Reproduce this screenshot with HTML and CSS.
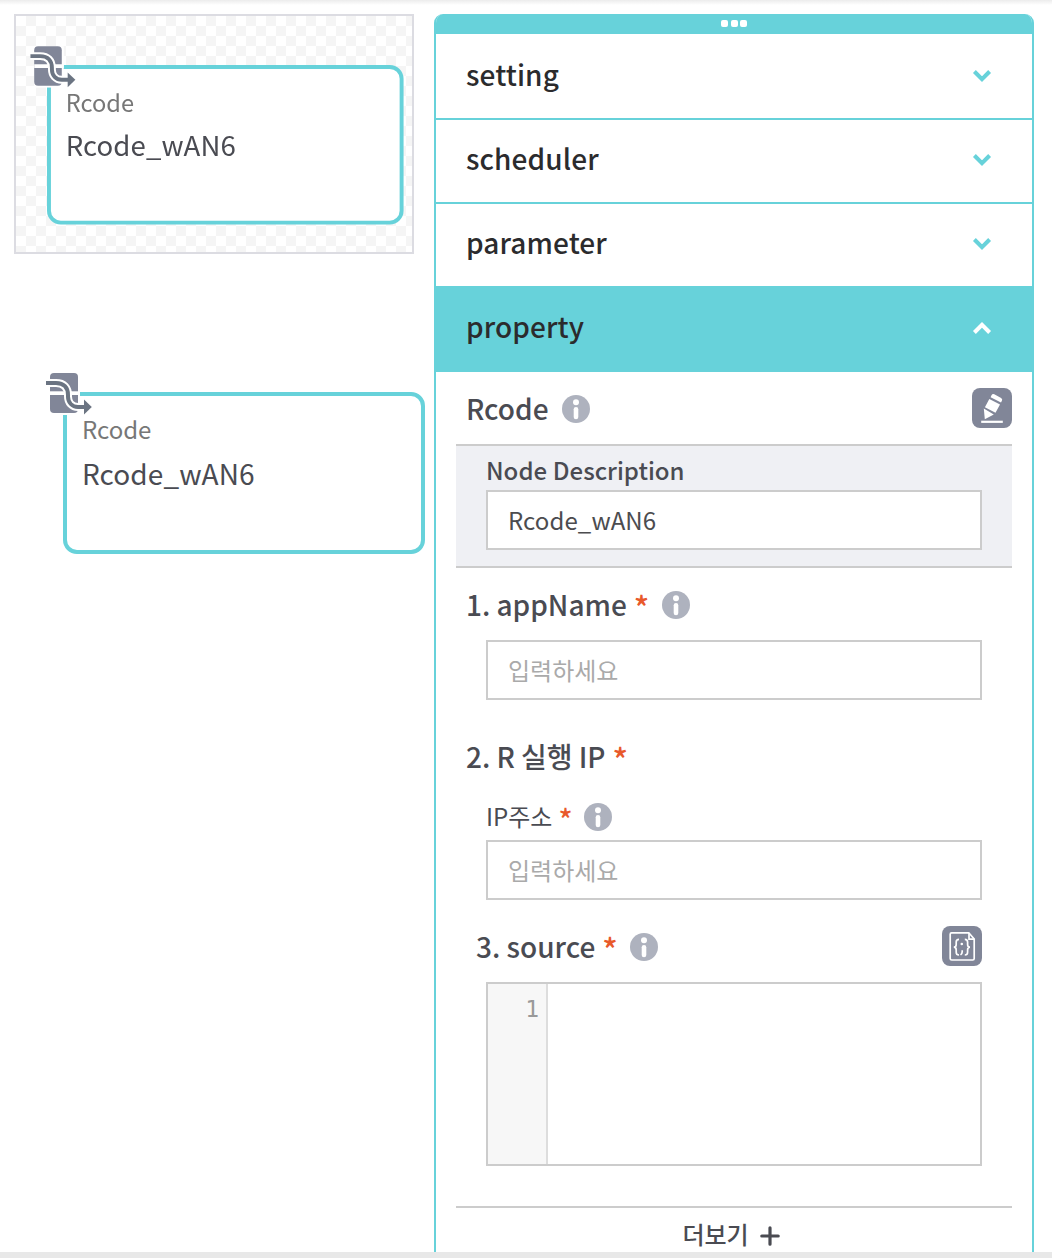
FILE: index.html
```html
<!DOCTYPE html>
<html lang="ko">
<head>
<meta charset="utf-8">
<title>Rcode</title>
<link rel="stylesheet" href="styles.css">
</head>
<body>
<svg class="defs" width="0" height="0" aria-hidden="true">
  <symbol id="flow" viewBox="0 0 48 44">
    <path d="M4 2h30v42H4z" fill="#fff"/>
    <rect x="4" y="2" width="28" height="40" rx="4" fill="#818698"/>
    <path d="M4 20.300h30v3.700H4z" fill="#fff"/>
    <path d="M0 12h10c8 0 12 4.500 12 12v1.500c0 6 4 10.500 10 10.500h7" fill="none" stroke="#fff" stroke-width="8"/>
    <path d="M0 12h10c8 0 12 4.500 12 12v1.500c0 6 4 10.500 10 10.500h7" fill="none" stroke="#6b7482" stroke-width="4"/>
    <path d="M38 28.500l7.800 7.500-7.800 7.500z" fill="#6b7482"/>
  </symbol>
  <symbol id="info" viewBox="0 0 28 28">
    <circle cx="14" cy="14" r="14" fill="#aeb2be"/>
    <circle cx="14" cy="7.300" r="3" fill="#fff"/>
    <rect x="11.700" y="12" width="4.600" height="12.200" rx="2.300" fill="#fff"/>
  </symbol>
  <symbol id="chevron" viewBox="0 0 20 14">
    <path d="M2.400 2.500L10 10.200l7.600-7.700" fill="none" stroke="currentColor" stroke-width="4"/>
  </symbol>
</svg>

<main class="page">
  <section class="canvas">
    <div class="preview">
      <div class="node node-preview">
        <svg class="node-icon"><use href="#flow"/></svg>
        <div class="node-type">Rcode</div>
        <div class="node-name">Rcode_wAN6</div>
      </div>
    </div>
    <div class="node node-live">
      <svg class="node-icon"><use href="#flow"/></svg>
      <div class="node-type">Rcode</div>
      <div class="node-name">Rcode_wAN6</div>
    </div>
  </section>

  <aside class="panel">
    <div class="handle"><i></i><i></i><i></i></div>
    <div class="tab"><span>setting</span><svg class="chevron"><use href="#chevron"/></svg></div>
    <div class="tab"><span>scheduler</span><svg class="chevron"><use href="#chevron"/></svg></div>
    <div class="tab"><span>parameter</span><svg class="chevron"><use href="#chevron"/></svg></div>
    <div class="tab open"><span>property</span><svg class="chevron up"><use href="#chevron"/></svg></div>

    <div class="content">
      <div class="head">
        <h2 class="title">Rcode</h2>
        <svg class="info"><use href="#info"/></svg>
        <button class="tool"><svg viewBox="0 0 40 40" fill="#fff">
          <path d="M19.500 7.200q1-1.700 2.800-.9l6.800 3.600q1.700 1 .9 2.600l-1 1.900-10.400-5.200zM17.300 11L28 16.500l-4.500 8.300-10.600-5.500zM11.800 20.500l10 6.100-9 4.700z"/>
          <path d="M9.200 32.700h21.600v2.200H9.200z"/>
        </svg></button>
      </div>

      <div class="description">
        <label class="desc-label">Node Description</label>
        <div class="field value">Rcode_wAN6</div>
      </div>

      <div class="row row-app">
        <h2 class="title">1. appName</h2><b class="req">*</b>
        <svg class="info"><use href="#info"/></svg>
      </div>
      <div class="field">입력하세요</div>

      <div class="row row-ip">
        <h2 class="title">2. R 실행 IP</h2><b class="req">*</b>
      </div>
      <div class="row row-addr">
        <span class="sub">IP주소</span><b class="req small">*</b>
        <svg class="info"><use href="#info"/></svg>
      </div>
      <div class="field">입력하세요</div>

      <div class="row row-source">
        <h2 class="title">3. source</h2><b class="req">*</b>
        <svg class="info"><use href="#info"/></svg>
        <button class="tool"><svg viewBox="0 0 40 40" fill="none" stroke="#fff" stroke-width="1.700">
          <path d="M9.500 6.800h17.300l5.400 6.200v19.500q0 1.500-1.500 1.500H9.700q-1.500 0-1.500-1.500V8.300q0-1.500 1.300-1.500z"/>
          <path d="M27 7v6.200h5.200"/>
          <path d="M17 13.400c-2.300 0-2.800 1-2.800 2.700v2.400c0 1.800-.7 2.700-2.400 2.700 1.700 0 2.400.9 2.400 2.700v2.400c0 1.700.5 2.700 2.800 2.700M22.800 13.400c2.300 0 2.800 1 2.800 2.700v2.400c0 1.800.7 2.700 2.400 2.700-1.700 0-2.400.9-2.400 2.700v2.400c0 1.700-.5 2.700-2.800 2.700"/>
          <circle cx="19.800" cy="18" r="1.300" fill="#fff" stroke="none"/>
          <path d="M20.200 24.200v1.500q0 2-1.700 3.200"/>
        </svg></button>
      </div>
      <div class="editor"><div class="gutter">1</div><div class="code"></div></div>

      <div class="more"><span>더보기</span>
        <svg class="plus" viewBox="0 0 20 20"><path d="M10 1.800v16.400M1.800 10h16.400" stroke="#4a4b52" stroke-width="3.200" stroke-linecap="round"/></svg>
      </div>
    </div>
  </aside>
</main>
<footer class="bottom"></footer>
</body>
</html>
```
FILE: styles.css
```css
* { box-sizing: border-box; }
body {
  margin: 0;
  height: 1258px;
  overflow: hidden;
  display: flex;
  flex-direction: column;
  background: linear-gradient(#ececec, #fff 5px) no-repeat #fff;
  font-family: "Noto Sans CJK KR", "Noto Sans", sans-serif;
  color: #4a4b52;
}
.defs { position: absolute; }
.page {
  height: 1252px;
  display: flex;
  gap: 20px;
  padding: 14px 18px 0 14px;
  overflow: hidden;
}
.bottom { height: 6px; background: #e8e8e8; }

.canvas { width: 400px; flex: none; position: relative; }
.preview {
  position: relative;
  width: 400px;
  height: 240px;
  border: 2px solid #dcdce2;
  background: conic-gradient(#f5f5f5 25%, #fff 0 50%, #f5f5f5 0 75%, #fff 0) 0 0 / 20px 20px;
}
.node {
  position: absolute;
  width: 362px;
  height: 162px;
  padding: 18px 15px;
  border: 4px solid #67d2da;
  border-radius: 14px;
  background: #fff;
}
.node-live { left: 49px; top: 378px; }
.node-preview {
  left: 30.600px;
  top: 48.700px;
  transform: scale(.985);
  transform-origin: 0 0;
  filter: blur(.65px);
}
.node-icon {
  position: absolute;
  left: -21px;
  top: -25px;
  width: 48px;
  height: 44px;
}
.node-type { font-size: 24px; line-height: 30px; color: #777; }
.node-name { margin-top: 9px; font-size: 28px; line-height: 40px; letter-spacing: .1px; }
.node-preview .node-type { margin-top: 1px; }
.node-preview .node-name { margin-top: 7px; }

.panel {
  width: 600px;
  flex: none;
  border: solid #67d2da;
  border-width: 0 2px;
  border-radius: 9px 9px 0 0;
  overflow: hidden;
}
.handle {
  height: 22px;
  display: flex;
  justify-content: center;
  gap: 2.200px;
  padding-top: 6px;
  background: linear-gradient(#67d2da 20px, #fff 0);
}
.handle i { width: 7px; height: 7px; border-radius: 2px; background: #fff; }
.tab {
  height: 84px;
  display: flex;
  justify-content: space-between;
  padding: 0 40px 0 30px;
  border-bottom: 2px solid #67d2da;
  font-size: 28px;
  font-weight: 500;
  line-height: 77px;
  letter-spacing: .1px;
  color: #2b2b2d;
}
.open { background: #67d2da; }
.chevron { width: 20px; height: 14px; margin-top: 33px; color: #67d2da; }
.chevron.up { transform: rotate(180deg); color: #fff; }

.content { padding: 0 20px; }
.head, .row { display: flex; align-items: center; }
.title { margin: 0; font-size: 28px; font-weight: 500; line-height: 40px; white-space: nowrap; word-spacing: -1.700px; }
.info { width: 28px; height: 28px; flex: none; margin: 1px 0 0 13px; }
.head { height: 72px; padding-left: 10px; }
.tool {
  width: 40px;
  height: 40px;
  margin-left: auto;
  padding: 0;
  border: 0;
  border-radius: 8px;
  background: #818698;
}
.tool svg { display: block; width: 40px; height: 40px; }
.description {
  height: 124px;
  padding-top: 9px;
  border: solid #ccc;
  border-width: 2px 0;
  background: #eff0f4;
}
.desc-label {
  display: block;
  height: 35px;
  margin-left: 30px;
  font-size: 24px;
  font-weight: 500;
  line-height: 30px;
  word-spacing: -1px;
}
.field {
  height: 60px;
  margin: 0 30px;
  padding-left: 20px;
  border: 2px solid #ccc;
  background: #fff;
  font-size: 24px;
  line-height: 56px;
  color: #aaa;
}
.value { color: #4c4c4f; letter-spacing: .1px; }
.req {
  width: 15px;
  margin: 4px 0 0 7px;
  color: #e8592b;
  font-size: 32px;
  font-weight: 500;
  line-height: 40px;
}
.row-app { height: 72px; padding-left: 10px; }
.row-ip { height: 92px; padding: 20px 0 0 10px; }
.row-addr { height: 48px; padding-left: 30px; }
.sub { font-size: 24px; line-height: 40px; }
.req.small { width: 13px; margin-left: 6px; font-size: 29px; }
.row-source { height: 82px; padding: 10px 30px 0 20px; }
.editor {
  display: flex;
  height: 184px;
  margin: 0 30px;
  border: 2px solid #ccc;
}
.gutter {
  width: 60px;
  padding: 10px 7px 0 0;
  border-right: 2px solid #ddd;
  background: #f7f7f7;
  font: 23px/30px "DejaVu Sans Mono", monospace;
  text-align: right;
  color: #999;
}
.code { flex: 1; }
.more {
  margin-top: 40px;
  border-top: 2px solid #ccc;
  height: 60px;
  display: flex;
  justify-content: center;
  gap: 11px;
  padding-right: 6px;
  font-size: 24px;
  font-weight: 500;
  line-height: 52px;
}
.plus { width: 20px; height: 20px; margin-top: 18px; }
```
